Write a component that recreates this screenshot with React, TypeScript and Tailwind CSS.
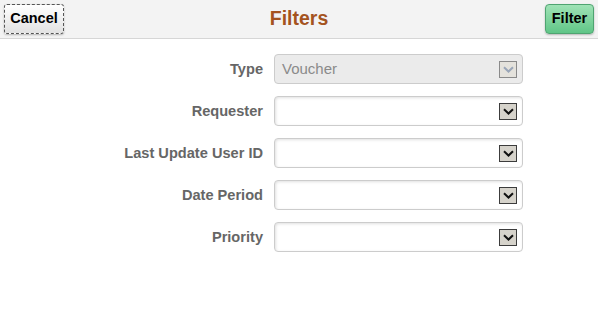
import React from "react";

const Chevron = ({ color }: { color: string }) => (
  <svg width="11" height="7" viewBox="0 0 11 7" className="block">
    <path d="M1 1.2 L5.5 5.5 L10 1.2" fill="none" stroke={color} strokeWidth="2" />
  </svg>
);

const Field = ({ label, value, disabled }: { label: string; value?: string; disabled?: boolean }) => (
  <div className="flex items-center h-[30px]">
    <div className="w-[263px] pt-[2px] text-right text-[14.6px] font-bold text-[#666666]">{label}</div>
    <div
      className={`ml-[11px] w-[249px] h-[30px] rounded-[4px] border border-[#cccccc] flex items-center pl-[7px] pr-[5px] ${
        disabled ? "bg-[#ebebeb]" : "bg-white shadow-[inset_1px_1px_3px_rgba(0,0,0,0.12)]"
      }`}
    >
      <span className="flex-1 text-[15px] text-[#8a8a8a]">{value}</span>
      <div
        className={`w-[18px] h-[17px] flex items-center justify-center border ${
          disabled ? "border-[#8a8a8a] bg-[#e4e2dc]" : "border-[#3c3c3c] bg-[#d6d3cb]"
        }`}
      >
        <Chevron color={disabled ? "#9aa6b8" : "#111111"} />
      </div>
    </div>
  </div>
);

export default function App() {
  return (
    <div className="w-[598px] h-[328px] bg-white" style={{ fontFamily: '"Liberation Sans", Arial, sans-serif' }}>
      <div className="h-[39px] bg-[#f3f3f3] border-b border-[#d6d6d6] flex items-center justify-between pl-[4px] pr-[4px] relative">
        <button className="h-[30px] w-[60px] rounded-[3px] border border-dashed border-[#555] bg-gradient-to-b from-[#ffffff] to-[#e2e2e2] text-[14.5px] font-bold text-black shadow-[0_1px_2px_rgba(0,0,0,0.25)]">
          Cancel
        </button>
        <div className="absolute left-0 right-0 text-center text-[19.5px] font-bold text-[#a4531e] pointer-events-none">
          Filters
        </div>
        <button className="h-[30px] w-[49px] rounded-[4px] border border-[#4fa471] bg-gradient-to-b from-[#9fe3b6] to-[#5fc587] text-[14.5px] font-bold text-black shadow-[0_1px_2px_rgba(0,0,0,0.25)]">
          Filter
        </button>
      </div>
      <div className="pt-[15px] flex flex-col gap-[12px]">
        <Field label="Type" value="Voucher" disabled />
        <Field label="Requester" />
        <Field label="Last Update User ID" />
        <Field label="Date Period" />
        <Field label="Priority" />
      </div>
    </div>
  );
}
